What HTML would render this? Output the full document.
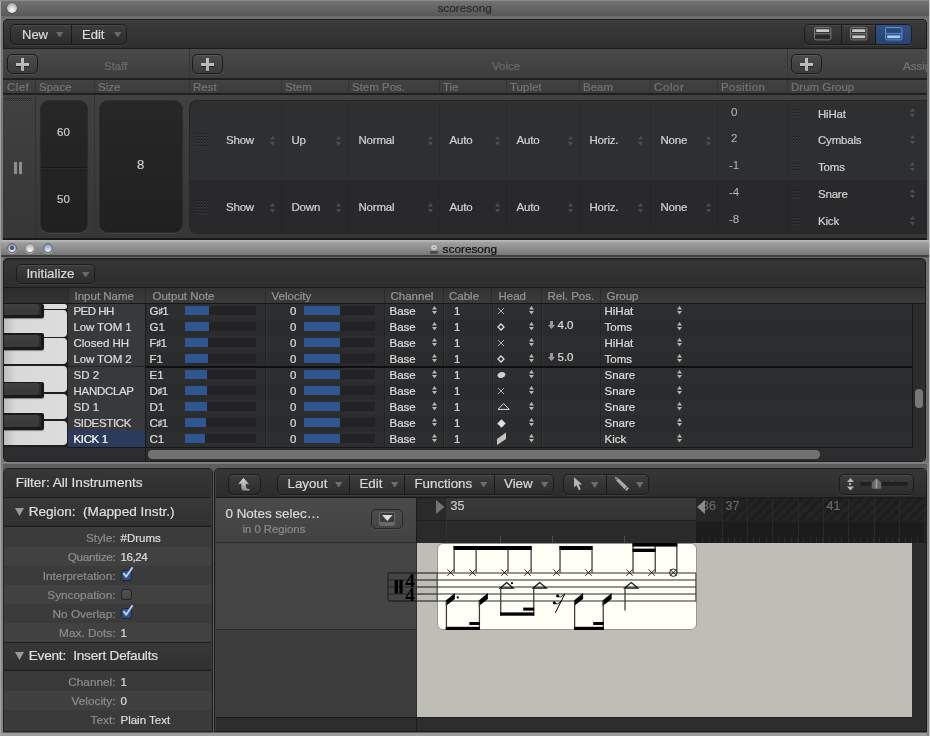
<!DOCTYPE html><html><head><meta charset="utf-8"><title>scoresong</title><style>
*{box-sizing:border-box;margin:0;padding:0}
html,body{width:930px;height:736px;overflow:hidden}
body{position:relative;background:#6c6c6c;will-change:transform;font-family:"Liberation Sans",sans-serif;color:#ccc}
div,svg{position:absolute}
.t{white-space:nowrap;-webkit-text-stroke:0.22px}
.a{display:block}
.ts{font-family:"Liberation Serif",serif;font-weight:bold;font-size:19.5px}
.btn{border:1px solid #1c1c1c;border-radius:5px;background:linear-gradient(#3c3c3c,#2c2c2c);box-shadow:0 1px 0 rgba(255,255,255,.08), inset 0 1px 0 rgba(255,255,255,.08)}
</style></head><body>
<svg width="0" height="0" style="left:0;top:0"><defs><pattern id="dp" width="3" height="3" patternUnits="userSpaceOnUse"><rect x="0" y="0" width="1.4" height="1.2" fill="#1b1b1d"/><rect x="0" y="1.2" width="1.4" height="1" fill="#3c3d3f"/></pattern><pattern id="dp2" width="2" height="2" patternUnits="userSpaceOnUse"><rect x="0" y="0" width="1" height="1" fill="#262626"/><rect x="0" y="1" width="1" height="1" fill="#484848"/></pattern></defs></svg>
<div style="left:0px;top:0px;width:930px;height:19px;background:linear-gradient(#a2a2a2 0,#747474 1px,#707070 2px,#595959 15.5px,#6c6c6c 16px,#707070 19px)"></div>
<div style="left:7px;top:3px;width:10px;height:10px;border-radius:50%;background:radial-gradient(circle at 50% 70%,#fff,#bbb 60%,#888);box-shadow:0 0 0 0.5px #444"></div>
<div class="t" style="left:437.4px;top:0.8px;font-size:11.8px;line-height:15.8px;color:#2c2c2c;">scoresong</div>
<div style="left:0px;top:19px;width:3px;height:221px;background:#767676"></div>
<div style="left:927px;top:19px;width:3px;height:221px;background:#6e6e6e"></div>
<div style="left:3px;top:19px;width:924px;height:219.5px;background:linear-gradient(#414141 76px,#363636);border-top:1px solid #222"></div>
<div style="left:3px;top:238px;width:924px;height:1.6px;background:#181818"></div>
<div style="left:3px;top:19px;width:924px;height:29px;background:linear-gradient(#444 0,#3a3a3a 2px,#2e2e2e);border-radius:4px 4px 0 0;border:1px solid #1c1c1c;border-bottom:none"></div>
<div style="left:3px;top:19px;width:4px;height:4px;background:radial-gradient(circle at 4px 4px,transparent 3.5px,#737373 4px)"></div>
<div style="left:923px;top:19px;width:4px;height:4px;background:radial-gradient(circle at 0 4px,transparent 3.5px,#737373 4px)"></div>
<div style="left:3px;top:47.7px;width:924px;height:1.5px;background:#1c1c1c"></div>
<div class="btn" style="left:10px;top:24px;width:117px;height:21px;"></div>
<div style="left:71px;top:25px;width:1px;height:19px;background:#1a1a1a"></div>
<div class="t" style="left:22px;top:25.7px;font-size:13px;line-height:17px;color:#d8d8d8;">New</div>
<svg class="a" style="left:55.5px;top:31.5px" width="7.4" height="5.6"><path d="M0 0H7.4L3.7 5.6Z" fill="#686868"/></svg>
<div class="t" style="left:82px;top:25.7px;font-size:13px;line-height:17px;color:#d8d8d8;">Edit</div>
<svg class="a" style="left:113.5px;top:31.5px" width="7.4" height="5.6"><path d="M0 0H7.4L3.7 5.6Z" fill="#686868"/></svg>
<div class="btn" style="left:804px;top:24px;width:108px;height:21px;"></div>
<div style="left:876px;top:25px;width:35px;height:19px;background:linear-gradient(#33507f,#2a4370);border-radius:0 4px 4px 0"></div>
<div style="left:841px;top:25px;width:1px;height:19px;background:#1a1a1a"></div>
<div style="left:875px;top:25px;width:1px;height:19px;background:#1a1a1a"></div>
<svg class="a" style="left:813.5px;top:27px" width="18" height="14"><rect x="0.5" y="0.5" width="16.4" height="12.4" rx="1.5" fill="none" stroke="#787878" stroke-width="1"/><rect x="0.5" y="6.2" width="16.4" height="1" fill="#787878"/><rect x="2.2" y="2.2" width="13" height="2.8" fill="#c8c8c8"/><rect x="2.2" y="8.4" width="13" height="2.8" fill="#262626"/></svg>
<svg class="a" style="left:849.5px;top:27px" width="18" height="14"><rect x="0.5" y="0.5" width="16.4" height="12.4" rx="1.5" fill="none" stroke="#787878" stroke-width="1"/><rect x="0.5" y="6.2" width="16.4" height="1" fill="#787878"/><rect x="2.2" y="2.2" width="13" height="2.8" fill="#c8c8c8"/><rect x="2.2" y="8.4" width="13" height="2.8" fill="#c8c8c8"/></svg>
<svg class="a" style="left:884.5px;top:27px" width="18" height="14"><rect x="0.5" y="0.5" width="16.4" height="12.4" rx="1.5" fill="none" stroke="#5f90d8" stroke-width="1"/><rect x="0.5" y="6.2" width="16.4" height="1" fill="#5f90d8"/><rect x="2.2" y="2.2" width="13" height="2.8" fill="#2c4674"/><rect x="2.2" y="8.4" width="13" height="2.8" fill="#a0ccff"/></svg>
<div style="left:3px;top:49px;width:924px;height:29px;background:linear-gradient(#4a4a4a,#484848 3px,#3d3d3d)"></div>
<div style="left:3px;top:78px;width:924px;height:2px;background:#202020"></div>
<div style="left:188.5px;top:49px;width:1px;height:29px;background:#363636"></div>
<div style="left:787px;top:49px;width:1px;height:29px;background:#363636"></div>
<div class="btn" style="left:7px;top:53.7px;width:31.4px;height:20.5px;background:linear-gradient(#4b4b4b,#3b3b3b)"></div>
<div style="left:16px;top:62.6px;width:13px;height:3px;background:#bdbdbd;box-shadow:0 1px 1px rgba(0,0,0,.5)"></div>
<div style="left:21px;top:57.6px;width:3px;height:13px;background:linear-gradient(#c4c4c4,#b0b0b0);box-shadow:0 1px 1px rgba(0,0,0,.3)"></div>
<div class="btn" style="left:192px;top:53.7px;width:31.4px;height:20.5px;background:linear-gradient(#4b4b4b,#3b3b3b)"></div>
<div style="left:201px;top:62.6px;width:13px;height:3px;background:#bdbdbd;box-shadow:0 1px 1px rgba(0,0,0,.5)"></div>
<div style="left:206px;top:57.6px;width:3px;height:13px;background:linear-gradient(#c4c4c4,#b0b0b0);box-shadow:0 1px 1px rgba(0,0,0,.3)"></div>
<div class="btn" style="left:791px;top:53.7px;width:31.4px;height:20.5px;background:linear-gradient(#4b4b4b,#3b3b3b)"></div>
<div style="left:800px;top:62.6px;width:13px;height:3px;background:#bdbdbd;box-shadow:0 1px 1px rgba(0,0,0,.5)"></div>
<div style="left:805px;top:57.6px;width:3px;height:13px;background:linear-gradient(#c4c4c4,#b0b0b0);box-shadow:0 1px 1px rgba(0,0,0,.3)"></div>
<div class="t" style="left:104px;top:58.5px;font-size:11.5px;line-height:15.5px;color:#6c6c6c;">Staff</div>
<div class="t" style="left:492px;top:58.5px;font-size:11.5px;line-height:15.5px;color:#6c6c6c;">Voice</div>
<div style="left:0px;top:0px;width:927px;height:240px;overflow:hidden;background:none"><div class="t" style="left:903px;top:58.5px;font-size:11.5px;line-height:15.5px;color:#747474;">Assign</div></div>
<div style="left:3px;top:80px;width:924px;height:13px;background:linear-gradient(#424242,#3c3c3c)"></div>
<div style="left:3px;top:93px;width:924px;height:2px;background:#202020"></div>
<div class="t" style="left:7px;top:80.0px;font-size:11.5px;line-height:15.5px;color:#747474;letter-spacing:0.4px">Clef</div>
<div class="t" style="left:39px;top:80.0px;font-size:11.5px;line-height:15.5px;color:#747474;letter-spacing:0px">Space</div>
<div class="t" style="left:98px;top:80.0px;font-size:11.5px;line-height:15.5px;color:#747474;letter-spacing:0px">Size</div>
<div class="t" style="left:193px;top:80.0px;font-size:11.5px;line-height:15.5px;color:#747474;letter-spacing:0px">Rest</div>
<div class="t" style="left:285px;top:80.0px;font-size:11.5px;line-height:15.5px;color:#747474;letter-spacing:0px">Stem</div>
<div class="t" style="left:352px;top:80.0px;font-size:11.5px;line-height:15.5px;color:#747474;letter-spacing:0px">Stem Pos.</div>
<div class="t" style="left:443px;top:80.0px;font-size:11.5px;line-height:15.5px;color:#747474;letter-spacing:0px">Tie</div>
<div class="t" style="left:510px;top:80.0px;font-size:11.5px;line-height:15.5px;color:#747474;letter-spacing:0px">Tuplet</div>
<div class="t" style="left:583px;top:80.0px;font-size:11.5px;line-height:15.5px;color:#747474;letter-spacing:0px">Beam</div>
<div class="t" style="left:654px;top:80.0px;font-size:11.5px;line-height:15.5px;color:#747474;letter-spacing:0.6px">Color</div>
<div class="t" style="left:721px;top:80.0px;font-size:11.5px;line-height:15.5px;color:#747474;letter-spacing:0.42px">Position</div>
<div class="t" style="left:791px;top:80.0px;font-size:11.5px;line-height:15.5px;color:#747474;letter-spacing:0px">Drum Group</div>
<div style="left:35px;top:80px;width:1px;height:13px;background:#343434"></div>
<div style="left:94px;top:80px;width:1px;height:13px;background:#343434"></div>
<div style="left:188.5px;top:80px;width:1px;height:13px;background:#343434"></div>
<div style="left:281px;top:80px;width:1px;height:13px;background:#343434"></div>
<div style="left:348px;top:80px;width:1px;height:13px;background:#343434"></div>
<div style="left:439px;top:80px;width:1px;height:13px;background:#343434"></div>
<div style="left:506px;top:80px;width:1px;height:13px;background:#343434"></div>
<div style="left:579px;top:80px;width:1px;height:13px;background:#343434"></div>
<div style="left:650px;top:80px;width:1px;height:13px;background:#343434"></div>
<div style="left:717px;top:80px;width:1px;height:13px;background:#343434"></div>
<div style="left:787px;top:80px;width:1px;height:13px;background:#343434"></div>
<div style="left:35px;top:95px;width:1px;height:143px;background:#333"></div>
<div style="left:94px;top:95px;width:1px;height:143px;background:#333"></div>
<svg class="a" style="left:5px;top:98px" width="27" height="4"><rect width="27" height="4" fill="url(#dp2)"/></svg>
<div style="left:14.3px;top:161.7px;width:3px;height:12px;background:#8e8e8e"></div>
<div style="left:19px;top:161.7px;width:3px;height:12px;background:#8e8e8e"></div>
<div style="left:40px;top:100px;width:48px;height:133px;background:linear-gradient(#272727,#202020);border-radius:9px;border:1px solid #2c2c2c;box-shadow:0 1px 0 rgba(255,255,255,.06)"></div>
<div style="left:41px;top:167px;width:46px;height:1px;background:#161616"></div>
<div style="left:41px;top:168px;width:46px;height:1px;background:#2c2c2c"></div>
<div class="t" style="left:57px;top:125.4px;font-size:11.5px;line-height:15.5px;color:#c8c8c8;">60</div>
<div class="t" style="left:57px;top:192.4px;font-size:11.5px;line-height:15.5px;color:#c8c8c8;">50</div>
<div style="left:99px;top:100px;width:84px;height:133px;background:linear-gradient(#272727,#202020);border-radius:9px;border:1px solid #2c2c2c;box-shadow:0 1px 0 rgba(255,255,255,.06)"></div>
<div class="t" style="left:137px;top:156.2px;font-size:13px;line-height:17px;color:#c8c8c8;">8</div>
<div style="left:189px;top:100px;width:740px;height:134px;background:#2e2f31;border-radius:8px 0 0 8px;border:1px solid #262626;border-right:none;overflow:hidden"><div style="left:0px;top:79px;width:740px;height:55px;background:#29292b"></div></div>
<div style="left:927px;top:95px;width:2px;height:143px;background:#707070"></div>
<div style="left:281px;top:103px;width:1px;height:74px;background:#2a2a2c"></div>
<div style="left:281px;top:184px;width:1px;height:47px;background:#252527"></div>
<div style="left:348px;top:103px;width:1px;height:74px;background:#2a2a2c"></div>
<div style="left:348px;top:184px;width:1px;height:47px;background:#252527"></div>
<div style="left:439px;top:103px;width:1px;height:74px;background:#2a2a2c"></div>
<div style="left:439px;top:184px;width:1px;height:47px;background:#252527"></div>
<div style="left:506px;top:103px;width:1px;height:74px;background:#2a2a2c"></div>
<div style="left:506px;top:184px;width:1px;height:47px;background:#252527"></div>
<div style="left:579px;top:103px;width:1px;height:74px;background:#2a2a2c"></div>
<div style="left:579px;top:184px;width:1px;height:47px;background:#252527"></div>
<div style="left:650px;top:103px;width:1px;height:74px;background:#2a2a2c"></div>
<div style="left:650px;top:184px;width:1px;height:47px;background:#252527"></div>
<div style="left:717px;top:103px;width:1px;height:74px;background:#2a2a2c"></div>
<div style="left:717px;top:184px;width:1px;height:47px;background:#252527"></div>
<div style="left:787px;top:103px;width:1px;height:74px;background:#2a2a2c"></div>
<div style="left:787px;top:184px;width:1px;height:47px;background:#252527"></div>
<svg class="a" style="left:194.5px;top:132.5px" width="14" height="15"><rect width="14" height="15" fill="url(#dp)"/></svg>
<div class="t" style="left:226px;top:133.4px;font-size:11.5px;line-height:15.5px;color:#d0d0d0;letter-spacing:-0.2px">Show</div>
<svg class="a" style="left:269.5px;top:135.70000000000002px" width="5" height="9.6"><path d="M0 3.6L2.5 0L5 3.6Z M0 6.0L2.5 9.6L5 6.0Z" fill="#4e4e4e"/></svg>
<div class="t" style="left:291.5px;top:133.4px;font-size:11.5px;line-height:15.5px;color:#d0d0d0;letter-spacing:-0.2px">Up</div>
<svg class="a" style="left:336.0px;top:135.70000000000002px" width="5" height="9.6"><path d="M0 3.6L2.5 0L5 3.6Z M0 6.0L2.5 9.6L5 6.0Z" fill="#4e4e4e"/></svg>
<div class="t" style="left:358.5px;top:133.4px;font-size:11.5px;line-height:15.5px;color:#d0d0d0;letter-spacing:-0.2px">Normal</div>
<svg class="a" style="left:427.5px;top:135.70000000000002px" width="5" height="9.6"><path d="M0 3.6L2.5 0L5 3.6Z M0 6.0L2.5 9.6L5 6.0Z" fill="#4e4e4e"/></svg>
<div class="t" style="left:449.5px;top:133.4px;font-size:11.5px;line-height:15.5px;color:#d0d0d0;letter-spacing:-0.2px">Auto</div>
<svg class="a" style="left:494.5px;top:135.70000000000002px" width="5" height="9.6"><path d="M0 3.6L2.5 0L5 3.6Z M0 6.0L2.5 9.6L5 6.0Z" fill="#4e4e4e"/></svg>
<div class="t" style="left:516.5px;top:133.4px;font-size:11.5px;line-height:15.5px;color:#d0d0d0;letter-spacing:-0.2px">Auto</div>
<svg class="a" style="left:567.5px;top:135.70000000000002px" width="5" height="9.6"><path d="M0 3.6L2.5 0L5 3.6Z M0 6.0L2.5 9.6L5 6.0Z" fill="#4e4e4e"/></svg>
<div class="t" style="left:589.5px;top:133.4px;font-size:11.5px;line-height:15.5px;color:#d0d0d0;letter-spacing:-0.2px">Horiz.</div>
<svg class="a" style="left:638.0px;top:135.70000000000002px" width="5" height="9.6"><path d="M0 3.6L2.5 0L5 3.6Z M0 6.0L2.5 9.6L5 6.0Z" fill="#4e4e4e"/></svg>
<div class="t" style="left:660.5px;top:133.4px;font-size:11.5px;line-height:15.5px;color:#d0d0d0;letter-spacing:-0.2px">None</div>
<svg class="a" style="left:705.5px;top:135.70000000000002px" width="5" height="9.6"><path d="M0 3.6L2.5 0L5 3.6Z M0 6.0L2.5 9.6L5 6.0Z" fill="#4e4e4e"/></svg>
<svg class="a" style="left:194.5px;top:199.5px" width="14" height="15"><rect width="14" height="15" fill="url(#dp)"/></svg>
<div class="t" style="left:226px;top:200.4px;font-size:11.5px;line-height:15.5px;color:#d0d0d0;letter-spacing:-0.2px">Show</div>
<svg class="a" style="left:269.5px;top:202.70000000000002px" width="5" height="9.6"><path d="M0 3.6L2.5 0L5 3.6Z M0 6.0L2.5 9.6L5 6.0Z" fill="#4e4e4e"/></svg>
<div class="t" style="left:291.5px;top:200.4px;font-size:11.5px;line-height:15.5px;color:#d0d0d0;letter-spacing:-0.2px">Down</div>
<svg class="a" style="left:336.0px;top:202.70000000000002px" width="5" height="9.6"><path d="M0 3.6L2.5 0L5 3.6Z M0 6.0L2.5 9.6L5 6.0Z" fill="#4e4e4e"/></svg>
<div class="t" style="left:358.5px;top:200.4px;font-size:11.5px;line-height:15.5px;color:#d0d0d0;letter-spacing:-0.2px">Normal</div>
<svg class="a" style="left:427.5px;top:202.70000000000002px" width="5" height="9.6"><path d="M0 3.6L2.5 0L5 3.6Z M0 6.0L2.5 9.6L5 6.0Z" fill="#4e4e4e"/></svg>
<div class="t" style="left:449.5px;top:200.4px;font-size:11.5px;line-height:15.5px;color:#d0d0d0;letter-spacing:-0.2px">Auto</div>
<svg class="a" style="left:494.5px;top:202.70000000000002px" width="5" height="9.6"><path d="M0 3.6L2.5 0L5 3.6Z M0 6.0L2.5 9.6L5 6.0Z" fill="#4e4e4e"/></svg>
<div class="t" style="left:516.5px;top:200.4px;font-size:11.5px;line-height:15.5px;color:#d0d0d0;letter-spacing:-0.2px">Auto</div>
<svg class="a" style="left:567.5px;top:202.70000000000002px" width="5" height="9.6"><path d="M0 3.6L2.5 0L5 3.6Z M0 6.0L2.5 9.6L5 6.0Z" fill="#4e4e4e"/></svg>
<div class="t" style="left:589.5px;top:200.4px;font-size:11.5px;line-height:15.5px;color:#d0d0d0;letter-spacing:-0.2px">Horiz.</div>
<svg class="a" style="left:638.0px;top:202.70000000000002px" width="5" height="9.6"><path d="M0 3.6L2.5 0L5 3.6Z M0 6.0L2.5 9.6L5 6.0Z" fill="#4e4e4e"/></svg>
<div class="t" style="left:660.5px;top:200.4px;font-size:11.5px;line-height:15.5px;color:#d0d0d0;letter-spacing:-0.2px">None</div>
<svg class="a" style="left:705.5px;top:202.70000000000002px" width="5" height="9.6"><path d="M0 3.6L2.5 0L5 3.6Z M0 6.0L2.5 9.6L5 6.0Z" fill="#4e4e4e"/></svg>
<div class="t" style="left:731px;top:104.5px;font-size:11.5px;line-height:15.5px;color:#b8b8b8;-webkit-text-stroke:0">0</div>
<svg class="a" style="left:792.5px;top:108.5px" width="8" height="9"><rect width="8" height="9" fill="url(#dp)"/></svg>
<div class="t" style="left:818px;top:106.5px;font-size:11.5px;line-height:15.5px;color:#d0d0d0;letter-spacing:-0.2px">HiHat</div>
<svg class="a" style="left:910.0px;top:108.2px" width="5" height="9.6"><path d="M0 3.6L2.5 0L5 3.6Z M0 6.0L2.5 9.6L5 6.0Z" fill="#4e4e4e"/></svg>
<div class="t" style="left:731px;top:131.4px;font-size:11.5px;line-height:15.5px;color:#b8b8b8;-webkit-text-stroke:0">2</div>
<svg class="a" style="left:792.5px;top:135.5px" width="8" height="9"><rect width="8" height="9" fill="url(#dp)"/></svg>
<div class="t" style="left:818px;top:133.4px;font-size:11.5px;line-height:15.5px;color:#d0d0d0;letter-spacing:-0.2px">Cymbals</div>
<svg class="a" style="left:910.0px;top:135.20000000000002px" width="5" height="9.6"><path d="M0 3.6L2.5 0L5 3.6Z M0 6.0L2.5 9.6L5 6.0Z" fill="#4e4e4e"/></svg>
<div class="t" style="left:729px;top:158.4px;font-size:11.5px;line-height:15.5px;color:#b8b8b8;-webkit-text-stroke:0">-1</div>
<svg class="a" style="left:792.5px;top:162.5px" width="8" height="9"><rect width="8" height="9" fill="url(#dp)"/></svg>
<div class="t" style="left:818px;top:160.4px;font-size:11.5px;line-height:15.5px;color:#d0d0d0;letter-spacing:-0.2px">Toms</div>
<svg class="a" style="left:910.0px;top:162.20000000000002px" width="5" height="9.6"><path d="M0 3.6L2.5 0L5 3.6Z M0 6.0L2.5 9.6L5 6.0Z" fill="#4e4e4e"/></svg>
<div class="t" style="left:729px;top:185.4px;font-size:11.5px;line-height:15.5px;color:#b8b8b8;-webkit-text-stroke:0">-4</div>
<svg class="a" style="left:792.5px;top:189.5px" width="8" height="9"><rect width="8" height="9" fill="url(#dp)"/></svg>
<div class="t" style="left:818px;top:187.4px;font-size:11.5px;line-height:15.5px;color:#d0d0d0;letter-spacing:-0.2px">Snare</div>
<svg class="a" style="left:910.0px;top:189.20000000000002px" width="5" height="9.6"><path d="M0 3.6L2.5 0L5 3.6Z M0 6.0L2.5 9.6L5 6.0Z" fill="#4e4e4e"/></svg>
<div class="t" style="left:729px;top:212.4px;font-size:11.5px;line-height:15.5px;color:#b8b8b8;-webkit-text-stroke:0">-8</div>
<svg class="a" style="left:792.5px;top:216.5px" width="8" height="9"><rect width="8" height="9" fill="url(#dp)"/></svg>
<div class="t" style="left:818px;top:214.4px;font-size:11.5px;line-height:15.5px;color:#d0d0d0;letter-spacing:-0.2px">Kick</div>
<svg class="a" style="left:910.0px;top:216.20000000000002px" width="5" height="9.6"><path d="M0 3.6L2.5 0L5 3.6Z M0 6.0L2.5 9.6L5 6.0Z" fill="#4e4e4e"/></svg>
<div style="left:0px;top:239.8px;width:930px;height:14.8px;background:linear-gradient(#b8b8b8 0,#b0b0b0 1.5px,#a0a0a0 2.5px,#787878 14.8px)"></div>
<div style="left:0px;top:254.5px;width:930px;height:2.2px;background:#3e3e3e"></div>
<div style="left:0px;top:256.6px;width:930px;height:2.4px;background:#6c6c6c"></div>
<div style="left:6.7px;top:242.5px;width:10.6px;height:10.6px;border-radius:50%;background:radial-gradient(circle at 50% 88%,#f2f6fa 0,#b4c2d2 45%,#6e7e90 100%);border:0.8px solid #5c6874;box-shadow:0 1px 0 rgba(255,255,255,.35)"></div>
<div style="left:10.3px;top:246.3px;width:3.4px;height:3.4px;border-radius:50%;background:#47586a"></div>
<div style="left:24.7px;top:242.5px;width:10.6px;height:10.6px;border-radius:50%;background:radial-gradient(circle at 50% 88%,#fff 0,#d6d6d6 45%,#9a9a9a 100%);border:0.8px solid #8a8a8a;box-shadow:0 1px 0 rgba(255,255,255,.35)"></div>
<div style="left:42.7px;top:242.5px;width:10.6px;height:10.6px;border-radius:50%;background:radial-gradient(circle at 50% 88%,#f2f6fa 0,#b4c2d2 45%,#6e7e90 100%);border:0.8px solid #5c6874;box-shadow:0 1px 0 rgba(255,255,255,.35)"></div>
<div style="left:430px;top:243px;width:8px;height:10.6px;background:linear-gradient(#9a9a9a,#8a8a8a 70%,#4e4e4e 72%);border-radius:1px"></div>
<div style="left:431.2px;top:244.5px;width:5.6px;height:5.6px;background:radial-gradient(circle,#8a8a8a 18%,#d4d4d4 30%,#b8b8b8);border-radius:50%"></div>
<div class="t" style="left:442.6px;top:242.3px;font-size:11.8px;line-height:15.8px;color:#101010;">scoresong</div>
<div style="left:0px;top:257px;width:3px;height:210px;background:#808080"></div>
<div style="left:926px;top:257px;width:4px;height:210px;background:#707070"></div>
<div style="left:3px;top:258.3px;width:923px;height:203.5px;background:#2b2c2e;border-radius:5px;border:1px solid #1c1c1c"></div>
<div style="left:4px;top:260px;width:921px;height:27px;background:linear-gradient(#353535,#2d2d2d);border-radius:5px 5px 0 0"></div>
<div style="left:4px;top:287px;width:921px;height:1px;background:#1a1a1a"></div>
<div class="btn" style="left:16px;top:263.7px;width:79px;height:20.6px;"></div>
<div class="t" style="left:26.4px;top:265.1px;font-size:13.3px;line-height:17.3px;color:#d8d8d8;">Initialize</div>
<svg class="a" style="left:81.5px;top:271.5px" width="7.4" height="5.6"><path d="M0 0H7.4L3.7 5.6Z" fill="#686868"/></svg>
<div style="left:4px;top:288px;width:921px;height:15px;background:linear-gradient(#333,#3a3a3a)"></div>
<div style="left:4px;top:302.8px;width:921px;height:1.8px;background:#171717"></div>
<div style="left:4px;top:288px;width:64px;height:15px;background:linear-gradient(#2c2c2c,#323232)"></div>
<div class="t" style="left:74.5px;top:289.4px;font-size:11.5px;line-height:15.5px;color:#949494;">Input Name</div>
<div class="t" style="left:152.5px;top:289.4px;font-size:11.5px;line-height:15.5px;color:#949494;">Output Note</div>
<div class="t" style="left:271.5px;top:289.4px;font-size:11.5px;line-height:15.5px;color:#949494;">Velocity</div>
<div class="t" style="left:390.5px;top:289.4px;font-size:11.5px;line-height:15.5px;color:#949494;">Channel</div>
<div class="t" style="left:449px;top:289.4px;font-size:11.5px;line-height:15.5px;color:#949494;">Cable</div>
<div class="t" style="left:498.5px;top:289.4px;font-size:11.5px;line-height:15.5px;color:#949494;">Head</div>
<div class="t" style="left:547.5px;top:289.4px;font-size:11.5px;line-height:15.5px;color:#949494;">Rel. Pos.</div>
<div class="t" style="left:606.5px;top:289.4px;font-size:11.5px;line-height:15.5px;color:#949494;">Group</div>
<div style="left:68px;top:288px;width:1px;height:15px;background:#2a2a2a"></div>
<div style="left:145px;top:288px;width:1px;height:15px;background:#2a2a2a"></div>
<div style="left:265px;top:288px;width:1px;height:15px;background:#2a2a2a"></div>
<div style="left:384px;top:288px;width:1px;height:15px;background:#2a2a2a"></div>
<div style="left:443px;top:288px;width:1px;height:15px;background:#2a2a2a"></div>
<div style="left:491px;top:288px;width:1px;height:15px;background:#2a2a2a"></div>
<div style="left:541px;top:288px;width:1px;height:15px;background:#2a2a2a"></div>
<div style="left:600px;top:288px;width:1px;height:15px;background:#2a2a2a"></div>
<div style="left:68px;top:304px;width:77px;height:143px;background:#38393b"></div>
<div style="left:145px;top:304px;width:1px;height:157px;background:#1c1c1c"></div>
<div style="left:146px;top:304px;width:766px;height:15px;background:#2d2e30"></div>
<div class="t" style="left:73.5px;top:303.9px;font-size:11.5px;line-height:15.5px;color:#dcdcdc;letter-spacing:-0.55px">PED HH</div>
<div class="t" style="left:149.5px;top:303.9px;font-size:11.5px;line-height:15.5px;color:#dcdcdc;">G<span style="font-size:9px;letter-spacing:-0.6px;position:relative;top:-0.5px">♯</span>1</div>
<div style="left:185px;top:305.6px;width:71px;height:9.2px;background:#232325"></div>
<div style="left:185px;top:305.6px;width:24px;height:9.2px;background:#2f5690"></div>
<div class="t" style="left:290px;top:303.9px;font-size:11.5px;line-height:15.5px;color:#dcdcdc;">0</div>
<div style="left:304px;top:305.6px;width:71px;height:9.2px;background:#232325"></div>
<div style="left:304px;top:305.6px;width:36px;height:9.2px;background:#2f5690"></div>
<div class="t" style="left:389.5px;top:303.9px;font-size:11.5px;line-height:15.5px;color:#dcdcdc;">Base</div>
<svg class="a" style="left:432.2px;top:306.45px" width="5" height="8.5"><path d="M0 3.5L2.5 0L5 3.5Z M0 5.0L2.5 8.5L5 5.0Z" fill="#b4b4b0"/></svg>
<div class="t" style="left:454px;top:303.9px;font-size:11.5px;line-height:15.5px;color:#dcdcdc;">1</div>
<svg class="a" style="left:497px;top:307px" width="8" height="8"><path d="M1 1L7 7M7 1L1 7" stroke="#bbb" stroke-width="0.9" fill="none"/></svg>
<svg class="a" style="left:529.0px;top:306.25px" width="5" height="8.5"><path d="M0 3.5L2.5 0L5 3.5Z M0 5.0L2.5 8.5L5 5.0Z" fill="#b4b4b0"/></svg>
<div class="t" style="left:604.5px;top:303.9px;font-size:11.5px;line-height:15.5px;color:#dcdcdc;">HiHat</div>
<svg class="a" style="left:677.0px;top:306.45px" width="5" height="8.5"><path d="M0 3.5L2.5 0L5 3.5Z M0 5.0L2.5 8.5L5 5.0Z" fill="#b4b4b0"/></svg>
<div style="left:146px;top:320px;width:766px;height:15px;background:#2a2b2d"></div>
<div class="t" style="left:73.5px;top:319.9px;font-size:11.5px;line-height:15.5px;color:#dcdcdc;letter-spacing:-0.12px">Low TOM 1</div>
<div class="t" style="left:149.5px;top:319.9px;font-size:11.5px;line-height:15.5px;color:#dcdcdc;">G1</div>
<div style="left:185px;top:321.6px;width:71px;height:9.2px;background:#232325"></div>
<div style="left:185px;top:321.6px;width:24px;height:9.2px;background:#2f5690"></div>
<div class="t" style="left:290px;top:319.9px;font-size:11.5px;line-height:15.5px;color:#dcdcdc;">0</div>
<div style="left:304px;top:321.6px;width:71px;height:9.2px;background:#232325"></div>
<div style="left:304px;top:321.6px;width:36px;height:9.2px;background:#2f5690"></div>
<div class="t" style="left:389.5px;top:319.9px;font-size:11.5px;line-height:15.5px;color:#dcdcdc;">Base</div>
<svg class="a" style="left:432.2px;top:322.45px" width="5" height="8.5"><path d="M0 3.5L2.5 0L5 3.5Z M0 5.0L2.5 8.5L5 5.0Z" fill="#b4b4b0"/></svg>
<div class="t" style="left:454px;top:319.9px;font-size:11.5px;line-height:15.5px;color:#dcdcdc;">1</div>
<svg class="a" style="left:497px;top:323px" width="8" height="8"><path d="M4 1L7 4L4 7L1 4Z" stroke="#e0e0e0" stroke-width="1.3" fill="none"/></svg>
<svg class="a" style="left:529.0px;top:322.25px" width="5" height="8.5"><path d="M0 3.5L2.5 0L5 3.5Z M0 5.0L2.5 8.5L5 5.0Z" fill="#b4b4b0"/></svg>
<svg class="a" style="left:548px;top:321px" width="7" height="8"><path d="M2 0H5V4H7L3.5 8L0 4H2Z" fill="#9a9a9a"/></svg>
<div class="t" style="left:557.5px;top:317.9px;font-size:11.5px;line-height:15.5px;color:#dcdcdc;">4.0</div>
<div class="t" style="left:604.5px;top:319.9px;font-size:11.5px;line-height:15.5px;color:#dcdcdc;">Toms</div>
<svg class="a" style="left:677.0px;top:322.45px" width="5" height="8.5"><path d="M0 3.5L2.5 0L5 3.5Z M0 5.0L2.5 8.5L5 5.0Z" fill="#b4b4b0"/></svg>
<div style="left:146px;top:336px;width:766px;height:15px;background:#2d2e30"></div>
<div class="t" style="left:73.5px;top:335.9px;font-size:11.5px;line-height:15.5px;color:#dcdcdc;letter-spacing:0px">Closed HH</div>
<div class="t" style="left:149.5px;top:335.9px;font-size:11.5px;line-height:15.5px;color:#dcdcdc;">F<span style="font-size:9px;letter-spacing:-0.6px;position:relative;top:-0.5px">♯</span>1</div>
<div style="left:185px;top:337.6px;width:71px;height:9.2px;background:#232325"></div>
<div style="left:185px;top:337.6px;width:23px;height:9.2px;background:#2f5690"></div>
<div class="t" style="left:290px;top:335.9px;font-size:11.5px;line-height:15.5px;color:#dcdcdc;">0</div>
<div style="left:304px;top:337.6px;width:71px;height:9.2px;background:#232325"></div>
<div style="left:304px;top:337.6px;width:36px;height:9.2px;background:#2f5690"></div>
<div class="t" style="left:389.5px;top:335.9px;font-size:11.5px;line-height:15.5px;color:#dcdcdc;">Base</div>
<svg class="a" style="left:432.2px;top:338.45px" width="5" height="8.5"><path d="M0 3.5L2.5 0L5 3.5Z M0 5.0L2.5 8.5L5 5.0Z" fill="#b4b4b0"/></svg>
<div class="t" style="left:454px;top:335.9px;font-size:11.5px;line-height:15.5px;color:#dcdcdc;">1</div>
<svg class="a" style="left:497px;top:339px" width="8" height="8"><path d="M1 1L7 7M7 1L1 7" stroke="#bbb" stroke-width="0.9" fill="none"/></svg>
<svg class="a" style="left:529.0px;top:338.25px" width="5" height="8.5"><path d="M0 3.5L2.5 0L5 3.5Z M0 5.0L2.5 8.5L5 5.0Z" fill="#b4b4b0"/></svg>
<div class="t" style="left:604.5px;top:335.9px;font-size:11.5px;line-height:15.5px;color:#dcdcdc;">HiHat</div>
<svg class="a" style="left:677.0px;top:338.45px" width="5" height="8.5"><path d="M0 3.5L2.5 0L5 3.5Z M0 5.0L2.5 8.5L5 5.0Z" fill="#b4b4b0"/></svg>
<div style="left:146px;top:352px;width:766px;height:15px;background:#2a2b2d"></div>
<div class="t" style="left:73.5px;top:351.9px;font-size:11.5px;line-height:15.5px;color:#dcdcdc;letter-spacing:-0.12px">Low TOM 2</div>
<div class="t" style="left:149.5px;top:351.9px;font-size:11.5px;line-height:15.5px;color:#dcdcdc;">F1</div>
<div style="left:185px;top:353.6px;width:71px;height:9.2px;background:#232325"></div>
<div style="left:185px;top:353.6px;width:23px;height:9.2px;background:#2f5690"></div>
<div class="t" style="left:290px;top:351.9px;font-size:11.5px;line-height:15.5px;color:#dcdcdc;">0</div>
<div style="left:304px;top:353.6px;width:71px;height:9.2px;background:#232325"></div>
<div style="left:304px;top:353.6px;width:36px;height:9.2px;background:#2f5690"></div>
<div class="t" style="left:389.5px;top:351.9px;font-size:11.5px;line-height:15.5px;color:#dcdcdc;">Base</div>
<svg class="a" style="left:432.2px;top:354.45px" width="5" height="8.5"><path d="M0 3.5L2.5 0L5 3.5Z M0 5.0L2.5 8.5L5 5.0Z" fill="#b4b4b0"/></svg>
<div class="t" style="left:454px;top:351.9px;font-size:11.5px;line-height:15.5px;color:#dcdcdc;">1</div>
<svg class="a" style="left:497px;top:355px" width="8" height="8"><path d="M4 1L7 4L4 7L1 4Z" stroke="#e0e0e0" stroke-width="1.3" fill="none"/></svg>
<svg class="a" style="left:529.0px;top:354.25px" width="5" height="8.5"><path d="M0 3.5L2.5 0L5 3.5Z M0 5.0L2.5 8.5L5 5.0Z" fill="#b4b4b0"/></svg>
<svg class="a" style="left:548px;top:353px" width="7" height="8"><path d="M2 0H5V4H7L3.5 8L0 4H2Z" fill="#9a9a9a"/></svg>
<div class="t" style="left:557.5px;top:349.9px;font-size:11.5px;line-height:15.5px;color:#dcdcdc;">5.0</div>
<div class="t" style="left:604.5px;top:351.9px;font-size:11.5px;line-height:15.5px;color:#dcdcdc;">Toms</div>
<svg class="a" style="left:677.0px;top:354.45px" width="5" height="8.5"><path d="M0 3.5L2.5 0L5 3.5Z M0 5.0L2.5 8.5L5 5.0Z" fill="#b4b4b0"/></svg>
<div style="left:146px;top:368px;width:766px;height:15px;background:#2d2e30"></div>
<div class="t" style="left:73.5px;top:367.9px;font-size:11.5px;line-height:15.5px;color:#dcdcdc;letter-spacing:0px">SD 2</div>
<div class="t" style="left:149.5px;top:367.9px;font-size:11.5px;line-height:15.5px;color:#dcdcdc;">E1</div>
<div style="left:185px;top:369.6px;width:71px;height:9.2px;background:#232325"></div>
<div style="left:185px;top:369.6px;width:22px;height:9.2px;background:#2f5690"></div>
<div class="t" style="left:290px;top:367.9px;font-size:11.5px;line-height:15.5px;color:#dcdcdc;">0</div>
<div style="left:304px;top:369.6px;width:71px;height:9.2px;background:#232325"></div>
<div style="left:304px;top:369.6px;width:36px;height:9.2px;background:#2f5690"></div>
<div class="t" style="left:389.5px;top:367.9px;font-size:11.5px;line-height:15.5px;color:#dcdcdc;">Base</div>
<svg class="a" style="left:432.2px;top:370.45px" width="5" height="8.5"><path d="M0 3.5L2.5 0L5 3.5Z M0 5.0L2.5 8.5L5 5.0Z" fill="#b4b4b0"/></svg>
<div class="t" style="left:454px;top:367.9px;font-size:11.5px;line-height:15.5px;color:#dcdcdc;">1</div>
<svg class="a" style="left:497px;top:371px" width="9" height="8"><ellipse cx="4.4" cy="4" rx="4" ry="2.8" transform="rotate(-20 4.4 4)" fill="#d0d0d0"/></svg>
<svg class="a" style="left:529.0px;top:370.25px" width="5" height="8.5"><path d="M0 3.5L2.5 0L5 3.5Z M0 5.0L2.5 8.5L5 5.0Z" fill="#b4b4b0"/></svg>
<div class="t" style="left:604.5px;top:367.9px;font-size:11.5px;line-height:15.5px;color:#dcdcdc;">Snare</div>
<svg class="a" style="left:677.0px;top:370.45px" width="5" height="8.5"><path d="M0 3.5L2.5 0L5 3.5Z M0 5.0L2.5 8.5L5 5.0Z" fill="#b4b4b0"/></svg>
<div style="left:146px;top:384px;width:766px;height:15px;background:#2a2b2d"></div>
<div class="t" style="left:73.5px;top:383.9px;font-size:11.5px;line-height:15.5px;color:#dcdcdc;letter-spacing:-0.3px">HANDCLAP</div>
<div class="t" style="left:149.5px;top:383.9px;font-size:11.5px;line-height:15.5px;color:#dcdcdc;">D<span style="font-size:9px;letter-spacing:-0.6px;position:relative;top:-0.5px">♯</span>1</div>
<div style="left:185px;top:385.6px;width:71px;height:9.2px;background:#232325"></div>
<div style="left:185px;top:385.6px;width:22px;height:9.2px;background:#2f5690"></div>
<div class="t" style="left:290px;top:383.9px;font-size:11.5px;line-height:15.5px;color:#dcdcdc;">0</div>
<div style="left:304px;top:385.6px;width:71px;height:9.2px;background:#232325"></div>
<div style="left:304px;top:385.6px;width:36px;height:9.2px;background:#2f5690"></div>
<div class="t" style="left:389.5px;top:383.9px;font-size:11.5px;line-height:15.5px;color:#dcdcdc;">Base</div>
<svg class="a" style="left:432.2px;top:386.45px" width="5" height="8.5"><path d="M0 3.5L2.5 0L5 3.5Z M0 5.0L2.5 8.5L5 5.0Z" fill="#b4b4b0"/></svg>
<div class="t" style="left:454px;top:383.9px;font-size:11.5px;line-height:15.5px;color:#dcdcdc;">1</div>
<svg class="a" style="left:497px;top:387px" width="8" height="8"><path d="M1 1L7 7M7 1L1 7" stroke="#bbb" stroke-width="0.9" fill="none"/></svg>
<svg class="a" style="left:529.0px;top:386.25px" width="5" height="8.5"><path d="M0 3.5L2.5 0L5 3.5Z M0 5.0L2.5 8.5L5 5.0Z" fill="#b4b4b0"/></svg>
<div class="t" style="left:604.5px;top:383.9px;font-size:11.5px;line-height:15.5px;color:#dcdcdc;">Snare</div>
<svg class="a" style="left:677.0px;top:386.45px" width="5" height="8.5"><path d="M0 3.5L2.5 0L5 3.5Z M0 5.0L2.5 8.5L5 5.0Z" fill="#b4b4b0"/></svg>
<div style="left:146px;top:400px;width:766px;height:15px;background:#2d2e30"></div>
<div class="t" style="left:73.5px;top:399.9px;font-size:11.5px;line-height:15.5px;color:#dcdcdc;letter-spacing:0px">SD 1</div>
<div class="t" style="left:149.5px;top:399.9px;font-size:11.5px;line-height:15.5px;color:#dcdcdc;">D1</div>
<div style="left:185px;top:401.6px;width:71px;height:9.2px;background:#232325"></div>
<div style="left:185px;top:401.6px;width:21.5px;height:9.2px;background:#2f5690"></div>
<div class="t" style="left:290px;top:399.9px;font-size:11.5px;line-height:15.5px;color:#dcdcdc;">0</div>
<div style="left:304px;top:401.6px;width:71px;height:9.2px;background:#232325"></div>
<div style="left:304px;top:401.6px;width:36px;height:9.2px;background:#2f5690"></div>
<div class="t" style="left:389.5px;top:399.9px;font-size:11.5px;line-height:15.5px;color:#dcdcdc;">Base</div>
<svg class="a" style="left:432.2px;top:402.45px" width="5" height="8.5"><path d="M0 3.5L2.5 0L5 3.5Z M0 5.0L2.5 8.5L5 5.0Z" fill="#b4b4b0"/></svg>
<div class="t" style="left:454px;top:399.9px;font-size:11.5px;line-height:15.5px;color:#dcdcdc;">1</div>
<svg class="a" style="left:497px;top:402px" width="14" height="9"><path d="M1 7.4L6.6 1.6L12.2 7.4Z" stroke="#e0e0e0" stroke-width="1" fill="none"/></svg>
<svg class="a" style="left:529.0px;top:402.25px" width="5" height="8.5"><path d="M0 3.5L2.5 0L5 3.5Z M0 5.0L2.5 8.5L5 5.0Z" fill="#b4b4b0"/></svg>
<div class="t" style="left:604.5px;top:399.9px;font-size:11.5px;line-height:15.5px;color:#dcdcdc;">Snare</div>
<svg class="a" style="left:677.0px;top:402.45px" width="5" height="8.5"><path d="M0 3.5L2.5 0L5 3.5Z M0 5.0L2.5 8.5L5 5.0Z" fill="#b4b4b0"/></svg>
<div style="left:146px;top:416px;width:766px;height:15px;background:#2a2b2d"></div>
<div class="t" style="left:73.5px;top:415.9px;font-size:11.5px;line-height:15.5px;color:#dcdcdc;letter-spacing:-0.36px">SIDESTICK</div>
<div class="t" style="left:149.5px;top:415.9px;font-size:11.5px;line-height:15.5px;color:#dcdcdc;">C<span style="font-size:9px;letter-spacing:-0.6px;position:relative;top:-0.5px">♯</span>1</div>
<div style="left:185px;top:417.6px;width:71px;height:9.2px;background:#232325"></div>
<div style="left:185px;top:417.6px;width:20.5px;height:9.2px;background:#2f5690"></div>
<div class="t" style="left:290px;top:415.9px;font-size:11.5px;line-height:15.5px;color:#dcdcdc;">0</div>
<div style="left:304px;top:417.6px;width:71px;height:9.2px;background:#232325"></div>
<div style="left:304px;top:417.6px;width:36px;height:9.2px;background:#2f5690"></div>
<div class="t" style="left:389.5px;top:415.9px;font-size:11.5px;line-height:15.5px;color:#dcdcdc;">Base</div>
<svg class="a" style="left:432.2px;top:418.45px" width="5" height="8.5"><path d="M0 3.5L2.5 0L5 3.5Z M0 5.0L2.5 8.5L5 5.0Z" fill="#b4b4b0"/></svg>
<div class="t" style="left:454px;top:415.9px;font-size:11.5px;line-height:15.5px;color:#dcdcdc;">1</div>
<svg class="a" style="left:497px;top:418.5px" width="9" height="9"><path d="M4.5 0.3L8.7 4.5L4.5 8.7L0.3 4.5Z" fill="#e0e0e0"/></svg>
<svg class="a" style="left:529.0px;top:418.25px" width="5" height="8.5"><path d="M0 3.5L2.5 0L5 3.5Z M0 5.0L2.5 8.5L5 5.0Z" fill="#b4b4b0"/></svg>
<div class="t" style="left:604.5px;top:415.9px;font-size:11.5px;line-height:15.5px;color:#dcdcdc;">Snare</div>
<svg class="a" style="left:677.0px;top:418.45px" width="5" height="8.5"><path d="M0 3.5L2.5 0L5 3.5Z M0 5.0L2.5 8.5L5 5.0Z" fill="#b4b4b0"/></svg>
<div style="left:146px;top:432px;width:766px;height:15px;background:#2d2e30"></div>
<div style="left:68px;top:430.4px;width:77px;height:16.2px;background:#2b3b5c"></div>
<div class="t" style="left:73.5px;top:431.9px;font-size:11.5px;line-height:15.5px;color:#fff;letter-spacing:-0.36px">KICK 1</div>
<div class="t" style="left:149.5px;top:431.9px;font-size:11.5px;line-height:15.5px;color:#dcdcdc;">C1</div>
<div style="left:185px;top:433.6px;width:71px;height:9.2px;background:#232325"></div>
<div style="left:185px;top:433.6px;width:20px;height:9.2px;background:#2f5690"></div>
<div class="t" style="left:290px;top:431.9px;font-size:11.5px;line-height:15.5px;color:#dcdcdc;">0</div>
<div style="left:304px;top:433.6px;width:71px;height:9.2px;background:#232325"></div>
<div style="left:304px;top:433.6px;width:36px;height:9.2px;background:#2f5690"></div>
<div class="t" style="left:389.5px;top:431.9px;font-size:11.5px;line-height:15.5px;color:#dcdcdc;">Base</div>
<svg class="a" style="left:432.2px;top:434.45px" width="5" height="8.5"><path d="M0 3.5L2.5 0L5 3.5Z M0 5.0L2.5 8.5L5 5.0Z" fill="#b4b4b0"/></svg>
<div class="t" style="left:454px;top:431.9px;font-size:11.5px;line-height:15.5px;color:#dcdcdc;">1</div>
<svg class="a" style="left:496px;top:432px" width="11" height="14"><path d="M1 13V7L10 0.5V7Z" fill="#c4c4c4"/></svg>
<svg class="a" style="left:529.0px;top:434.25px" width="5" height="8.5"><path d="M0 3.5L2.5 0L5 3.5Z M0 5.0L2.5 8.5L5 5.0Z" fill="#b4b4b0"/></svg>
<div class="t" style="left:604.5px;top:431.9px;font-size:11.5px;line-height:15.5px;color:#dcdcdc;">Kick</div>
<svg class="a" style="left:677.0px;top:434.45px" width="5" height="8.5"><path d="M0 3.5L2.5 0L5 3.5Z M0 5.0L2.5 8.5L5 5.0Z" fill="#b4b4b0"/></svg>
<div style="left:265px;top:304px;width:1px;height:143px;background:rgba(0,0,0,.22)"></div>
<div style="left:266px;top:304px;width:1px;height:143px;background:rgba(255,255,255,.03)"></div>
<div style="left:384px;top:304px;width:1px;height:143px;background:rgba(0,0,0,.22)"></div>
<div style="left:385px;top:304px;width:1px;height:143px;background:rgba(255,255,255,.03)"></div>
<div style="left:443px;top:304px;width:1px;height:143px;background:rgba(0,0,0,.22)"></div>
<div style="left:444px;top:304px;width:1px;height:143px;background:rgba(255,255,255,.03)"></div>
<div style="left:492px;top:304px;width:1px;height:143px;background:rgba(0,0,0,.22)"></div>
<div style="left:493px;top:304px;width:1px;height:143px;background:rgba(255,255,255,.03)"></div>
<div style="left:541px;top:304px;width:1px;height:143px;background:rgba(0,0,0,.22)"></div>
<div style="left:542px;top:304px;width:1px;height:143px;background:rgba(255,255,255,.03)"></div>
<div style="left:600px;top:304px;width:1px;height:143px;background:rgba(0,0,0,.22)"></div>
<div style="left:601px;top:304px;width:1px;height:143px;background:rgba(255,255,255,.03)"></div>
<div style="left:146px;top:366px;width:766px;height:1.5px;background:#0e0e0e"></div>
<div style="left:68px;top:366px;width:77px;height:1px;background:#222"></div>
<div style="left:68px;top:446.5px;width:845px;height:1px;background:#161616"></div>
<div style="left:4px;top:304px;width:64px;height:143px;background:#1e1e1e"></div>
<div style="left:4px;top:304px;width:63px;height:5px;background:linear-gradient(90deg,#bdbdbd,#d9d9d9 12px,#dcdcdc);border-radius:0 4px 4px 0"></div>
<div style="left:4px;top:310.2px;width:63px;height:26.4px;background:linear-gradient(90deg,#bdbdbd,#d9d9d9 12px,#dcdcdc);border-radius:0 4px 4px 0"></div>
<div style="left:4px;top:338.2px;width:63px;height:26.3px;background:linear-gradient(90deg,#bdbdbd,#d9d9d9 12px,#dcdcdc);border-radius:0 4px 4px 0"></div>
<div style="left:4px;top:366.3px;width:63px;height:25.8px;background:linear-gradient(90deg,#bdbdbd,#d9d9d9 12px,#dcdcdc);border-radius:0 4px 4px 0"></div>
<div style="left:4px;top:393.5px;width:63px;height:25.8px;background:linear-gradient(90deg,#bdbdbd,#d9d9d9 12px,#dcdcdc);border-radius:0 4px 4px 0"></div>
<div style="left:4px;top:420.7px;width:63px;height:24.7px;background:linear-gradient(90deg,#bdbdbd,#d9d9d9 12px,#dcdcdc);border-radius:0 4px 4px 0"></div>
<div style="left:4px;top:304px;width:40px;height:14.1px;background:#1a1a1a;border-radius:0 2px 2px 0;box-shadow:0 1px 1px rgba(0,0,0,.4)"></div>
<div style="left:4px;top:304px;width:34.5px;height:11.1px;background:linear-gradient(#404042,#38383a);border-radius:0 2px 2px 0"></div>
<div style="left:38.5px;top:304px;width:2px;height:11.1px;background:#2c2c2e"></div>
<div style="left:4px;top:333.3px;width:40px;height:16.9px;background:#1a1a1a;border-radius:0 2px 2px 0;box-shadow:0 1px 1px rgba(0,0,0,.4)"></div>
<div style="left:4px;top:334.8px;width:34.5px;height:12.399999999999999px;background:linear-gradient(#404042,#38383a);border-radius:0 2px 2px 0"></div>
<div style="left:38.5px;top:334.8px;width:2px;height:12.399999999999999px;background:#2c2c2e"></div>
<div style="left:4px;top:381.6px;width:40px;height:16.4px;background:#1a1a1a;border-radius:0 2px 2px 0;box-shadow:0 1px 1px rgba(0,0,0,.4)"></div>
<div style="left:4px;top:383.1px;width:34.5px;height:11.899999999999999px;background:linear-gradient(#404042,#38383a);border-radius:0 2px 2px 0"></div>
<div style="left:38.5px;top:383.1px;width:2px;height:11.899999999999999px;background:#2c2c2e"></div>
<div style="left:4px;top:413.3px;width:40px;height:16.9px;background:#1a1a1a;border-radius:0 2px 2px 0;box-shadow:0 1px 1px rgba(0,0,0,.4)"></div>
<div style="left:4px;top:414.8px;width:34.5px;height:12.399999999999999px;background:linear-gradient(#404042,#38383a);border-radius:0 2px 2px 0"></div>
<div style="left:38.5px;top:414.8px;width:2px;height:12.399999999999999px;background:#2c2c2e"></div>
<div style="left:4px;top:447.5px;width:921px;height:13.5px;background:#2d2d2f"></div>
<div style="left:145px;top:447px;width:1px;height:14.5px;background:#1a1a1a"></div>
<div style="left:148px;top:450px;width:671.5px;height:8.5px;background:#727272;border-radius:4.2px"></div>
<div style="left:912px;top:304px;width:13px;height:143px;background:#2c2c2e;border-left:1px solid #161616"></div>
<div style="left:915.2px;top:389px;width:8.3px;height:18.7px;background:#787878;border-radius:4.2px"></div>
<div style="left:0px;top:461.5px;width:930px;height:274.5px;background:#5e5e5e"></div>
<div style="left:0px;top:461.5px;width:930px;height:2.8px;background:linear-gradient(#868686,#787878)"></div>
<div style="left:0px;top:467px;width:3px;height:269px;background:#868686"></div>
<div style="left:3px;top:468px;width:209.5px;height:264px;background:#3d3d3d;border:1px solid #222;border-right:1.4px solid #1e1e1e;border-radius:5px 5px 0 0;overflow:hidden"></div>
<div style="left:4px;top:469px;width:207px;height:28px;background:linear-gradient(#363636,#2f2f2f)"></div>
<div style="left:4px;top:497px;width:207px;height:1px;background:#1c1c1c"></div>
<div class="t" style="left:15.7px;top:473.9px;font-size:13.6px;line-height:17.6px;color:#dedede;">Filter: All Instruments</div>
<div style="left:4px;top:498px;width:207px;height:28px;background:linear-gradient(#383838,#303030)"></div>
<div style="left:4px;top:526px;width:207px;height:1px;background:#1c1c1c"></div>
<svg class="a" style="left:15px;top:508px" width="9" height="8"><path d="M0 0H9L4.5 8Z" fill="#9a9a9a"/></svg>
<div class="t" style="left:28.7px;top:502.9px;font-size:13.6px;line-height:17.6px;color:#dedede;">Region:&nbsp; (Mapped Instr.)</div>
<div style="left:4px;top:527px;width:207px;height:21px;background:#3b3b3b"></div>
<div class="t" style="right:814.5px;top:530.8px;font-size:11.8px;line-height:15.8px;color:#8c8c8c;">Style:</div>
<div class="t" style="left:120.5px;top:531.0px;font-size:11.5px;line-height:15.5px;color:#dcdcdc;">#Drums</div>
<div style="left:4px;top:547px;width:207px;height:19px;background:#414141"></div>
<div class="t" style="right:814.5px;top:549.8px;font-size:11.8px;line-height:15.8px;color:#8c8c8c;letter-spacing:-0.3px">Quantize:</div>
<div class="t" style="left:120.5px;top:550.0px;font-size:11.5px;line-height:15.5px;color:#dcdcdc;letter-spacing:-0.4px">16,24</div>
<div style="left:4px;top:566px;width:207px;height:19px;background:#3b3b3b"></div>
<div class="t" style="right:814.5px;top:568.8px;font-size:11.8px;line-height:15.8px;color:#8c8c8c;">Interpretation:</div>
<div style="left:120.7px;top:569.6px;width:11.6px;height:11.4px;background:linear-gradient(#38558a,#324c7c);border:1px solid #1e2634;border-radius:3px"></div><svg class="a" style="left:121px;top:566px" width="14" height="14"><path d="M2.4 7.2L5.2 10.6L11.6 1.2" stroke="#b4d0ff" stroke-width="1.9" fill="none"/></svg>
<div style="left:4px;top:585px;width:207px;height:19px;background:#414141"></div>
<div class="t" style="right:814.5px;top:587.8px;font-size:11.8px;line-height:15.8px;color:#8c8c8c;">Syncopation:</div>
<div style="left:120.7px;top:588.6px;width:11.6px;height:11.4px;background:linear-gradient(#505050,#454545);border:1px solid #222;border-radius:3px"></div>
<div style="left:4px;top:604px;width:207px;height:19px;background:#3b3b3b"></div>
<div class="t" style="right:814.5px;top:606.8px;font-size:11.8px;line-height:15.8px;color:#8c8c8c;">No Overlap:</div>
<div style="left:120.7px;top:607.6px;width:11.6px;height:11.4px;background:linear-gradient(#38558a,#324c7c);border:1px solid #1e2634;border-radius:3px"></div><svg class="a" style="left:121px;top:604px" width="14" height="14"><path d="M2.4 7.2L5.2 10.6L11.6 1.2" stroke="#b4d0ff" stroke-width="1.9" fill="none"/></svg>
<div style="left:4px;top:623px;width:207px;height:19px;background:#414141"></div>
<div class="t" style="right:814.5px;top:625.8px;font-size:11.8px;line-height:15.8px;color:#8c8c8c;">Max. Dots:</div>
<div class="t" style="left:120.5px;top:626.0px;font-size:11.5px;line-height:15.5px;color:#dcdcdc;">1</div>
<div style="left:4px;top:642px;width:207px;height:1px;background:#1c1c1c"></div>
<div style="left:4px;top:643px;width:207px;height:27px;background:linear-gradient(#383838,#303030)"></div>
<div style="left:4px;top:670px;width:207px;height:1px;background:#1c1c1c"></div>
<svg class="a" style="left:15px;top:652px" width="9" height="8"><path d="M0 0H9L4.5 8Z" fill="#9a9a9a"/></svg>
<div class="t" style="left:28.7px;top:646.9px;font-size:13.6px;line-height:17.6px;color:#dedede;letter-spacing:-0.2px">Event:&nbsp; Insert Defaults</div>
<div style="left:4px;top:671px;width:207px;height:20px;background:#3a3a3a"></div>
<div class="t" style="right:814.5px;top:674.8px;font-size:11.8px;line-height:15.8px;color:#8c8c8c;">Channel:</div>
<div class="t" style="left:120.5px;top:675.0px;font-size:11.5px;line-height:15.5px;color:#dcdcdc;">1</div>
<div style="left:4px;top:691px;width:207px;height:19px;background:#404040"></div>
<div class="t" style="right:814.5px;top:693.8px;font-size:11.8px;line-height:15.8px;color:#8c8c8c;">Velocity:</div>
<div class="t" style="left:120.5px;top:694.0px;font-size:11.5px;line-height:15.5px;color:#dcdcdc;">0</div>
<div style="left:4px;top:710px;width:207px;height:22px;background:#3a3a3a"></div>
<div class="t" style="right:814.5px;top:712.8px;font-size:11.8px;line-height:15.8px;color:#8c8c8c;">Text:</div>
<div class="t" style="left:120.5px;top:713.0px;font-size:11.5px;line-height:15.5px;color:#dcdcdc;">Plain Text</div>
<div style="left:0px;top:732.6px;width:930px;height:3.4px;background:#9c9c9c"></div>
<div style="left:3px;top:731px;width:209px;height:1px;background:#222"></div>
<div style="left:214px;top:468px;width:713px;height:264px;background:#404040;border:1px solid #1e1e1e;border-left:1.4px solid #1c1c1c;border-radius:5px 5px 0 0"></div>
<div style="left:216px;top:469px;width:710px;height:28px;background:linear-gradient(#363636,#2c2c2c)"></div>
<div style="left:216px;top:497px;width:710px;height:1px;background:#1a1a1a"></div>
<div style="left:927px;top:467px;width:3px;height:269px;background:#868686"></div>
<div class="btn" style="left:228px;top:474px;width:33px;height:21px;"></div>
<svg class="a" style="left:236px;top:476px" width="16" height="17" viewBox="236 476 16 17"><defs><linearGradient id="ag" x1="0" y1="0" x2="0" y2="1"><stop offset="0" stop-color="#d8d8d8"/><stop offset="1" stop-color="#8c8c8c"/></linearGradient></defs><path d="M243.4 477.4L249.6 484.2H246.3V487Q246.3 488.8 250 488.8V491H244.6Q241 491 241 487.4V484.2H237.6Z" fill="url(#ag)" stroke="#1a1a1a" stroke-width="0.5"/></svg>
<div class="btn" style="left:277px;top:474px;width:277px;height:21px;"></div>
<div style="left:349px;top:475px;width:1px;height:19px;background:#1a1a1a"></div>
<div style="left:404px;top:475px;width:1px;height:19px;background:#1a1a1a"></div>
<div style="left:494px;top:475px;width:1px;height:19px;background:#1a1a1a"></div>
<div class="t" style="left:287.5px;top:475.1px;font-size:13.3px;line-height:17.3px;color:#d8d8d8;">Layout</div>
<svg class="a" style="left:334.5px;top:481.5px" width="7.4" height="5.6"><path d="M0 0H7.4L3.7 5.6Z" fill="#6e6e6e"/></svg>
<div class="t" style="left:359.5px;top:475.1px;font-size:13.3px;line-height:17.3px;color:#d8d8d8;">Edit</div>
<svg class="a" style="left:390.5px;top:481.5px" width="7.4" height="5.6"><path d="M0 0H7.4L3.7 5.6Z" fill="#6e6e6e"/></svg>
<div class="t" style="left:414.5px;top:475.1px;font-size:13.3px;line-height:17.3px;color:#d8d8d8;">Functions</div>
<svg class="a" style="left:479.5px;top:481.5px" width="7.4" height="5.6"><path d="M0 0H7.4L3.7 5.6Z" fill="#6e6e6e"/></svg>
<div class="t" style="left:504px;top:475.1px;font-size:13.3px;line-height:17.3px;color:#d8d8d8;">View</div>
<svg class="a" style="left:540.5px;top:481.5px" width="7.4" height="5.6"><path d="M0 0H7.4L3.7 5.6Z" fill="#6e6e6e"/></svg>
<div class="btn" style="left:563px;top:474px;width:86px;height:21px;"></div>
<div style="left:606px;top:475px;width:1px;height:19px;background:#1a1a1a"></div>
<svg class="a" style="left:573px;top:476px" width="12" height="16"><path d="M1 1.2V11.6L3.6 9.2L5.8 14.2L7.8 13.3L5.7 8.5H9.2Z" fill="#b4b4b4"/></svg>
<svg class="a" style="left:591px;top:481.5px" width="7.5" height="6"><path d="M0 0H7.5L3.75 6Z" fill="#6e6e6e"/></svg>
<svg class="a" style="left:613px;top:475px" width="18" height="18"><path d="M1.5 1.8L5 2.8L3 5Z" fill="#9a9a9a"/><path d="M5.3 3.2L14.2 11.4L11.6 14.2L3.2 5.4Z" fill="#a8a8a8"/><path d="M14.8 12L12.2 14.8L13.4 15.8L15.8 13.2Z" fill="#c4c4c4"/></svg>
<svg class="a" style="left:635.5px;top:481.5px" width="7.5" height="6"><path d="M0 0H7.5L3.75 6Z" fill="#6e6e6e"/></svg>
<div class="btn" style="left:839px;top:474px;width:75px;height:21px;"></div>
<svg class="a" style="left:846.5px;top:477.9px" width="7" height="12.6"><path d="M0 4L3.5 0L7 4Z M0 8.6L3.5 12.6L7 8.6Z" fill="#b8b8b8"/></svg>
<div style="left:849px;top:483.2px;width:2px;height:2px;background:#b8b8b8"></div>
<div style="left:860px;top:482.2px;width:48px;height:3.5px;background:#202020;border-radius:2px"></div>
<div style="left:863px;top:479.5px;width:1.5px;height:1.5px;background:#4a4a4a;border-radius:1px"></div>
<div style="left:866px;top:479.5px;width:1.5px;height:1.5px;background:#4a4a4a;border-radius:1px"></div>
<div style="left:870px;top:479.5px;width:1.5px;height:1.5px;background:#4a4a4a;border-radius:1px"></div>
<div style="left:891px;top:479.5px;width:1.5px;height:1.5px;background:#4a4a4a;border-radius:1px"></div>
<div style="left:905px;top:479.5px;width:1.5px;height:1.5px;background:#4a4a4a;border-radius:1px"></div>
<svg class="a" style="left:870.5px;top:477.5px" width="11" height="11"><path d="M5.5 0.3L10.3 4.5V9.5Q10.3 10.7 9 10.7H2Q0.7 10.7 0.7 9.5V4.5Z" fill="#686868"/><rect x="4.6" y="1.5" width="1.8" height="9" fill="#9c9c9c"/></svg>
<div style="left:216px;top:498px;width:200px;height:45px;background:linear-gradient(#4a4a4a,#424242)"></div>
<div style="left:216px;top:542px;width:200px;height:1px;background:#2a2a2a"></div>
<div class="t" style="left:225.5px;top:505.0px;font-size:13.4px;line-height:17.4px;color:#d8d8d8;">0 Notes selec…</div>
<div class="t" style="left:242.5px;top:521.6px;font-size:11.3px;line-height:15.3px;color:#8a8a8a;">in 0 Regions</div>
<div style="left:371px;top:508.5px;width:32px;height:20.5px;background:linear-gradient(#4c4c4c,#454545);border:1px solid #262626;border-radius:5px;box-shadow:0 1px 0 rgba(255,255,255,.08)"></div>
<div style="left:379px;top:512px;width:16px;height:14px;background:linear-gradient(#3a3a3a 0,#3a3a3a 9px,#6a6a6a 9px,#6a6a6a 12px);border-radius:2px;border:1px solid #686868"></div>
<svg class="a" style="left:382px;top:515px" width="11" height="6"><path d="M0 0H10.6L5.3 6Z" fill="#dcdcdc"/></svg>
<div style="left:416px;top:498px;width:510px;height:45px;background:#2a2a2a;border-left:1px solid #1c1c1c"></div>
<div style="left:446px;top:498px;width:250px;height:22px;background:linear-gradient(#3a3a3a,#333)"></div>
<div style="left:416px;top:520px;width:280px;height:1px;background:#1f1f1f"></div>
<div style="left:446px;top:498px;width:1px;height:45px;background:#333"></div>
<div style="left:696px;top:498px;width:230px;height:45px;background:#1c1c1c"></div>
<div style="left:696px;top:498px;width:230px;height:23px;background:repeating-linear-gradient(135deg,#232323 0,#232323 3.5px,#1e1e1e 3.5px,#1e1e1e 7px)"></div>
<div style="left:696px;top:498px;width:26px;height:23px;background:#252525"></div>
<div style="left:696px;top:520.5px;width:230px;height:1px;background:#222"></div>
<svg class="a" style="left:436px;top:500px" width="9" height="14"><path d="M0 0L8.5 7L0 14Z" fill="#747474"/></svg>
<div class="t" style="left:450.5px;top:498.4px;font-size:12.5px;line-height:16.5px;color:#c8c8c8;">35</div>
<div class="t" style="left:702px;top:498.4px;font-size:12.5px;line-height:16.5px;color:#666;">36</div>
<svg class="a" style="left:697px;top:500px" width="9" height="14"><path d="M8 0L0 7L8 14Z" fill="#8a8a8a"/></svg>
<div class="t" style="left:725.5px;top:498.4px;font-size:12.5px;line-height:16.5px;color:#686868;">37</div>
<div class="t" style="left:826.5px;top:498.4px;font-size:12.5px;line-height:16.5px;color:#686868;">41</div>
<div style="left:500px;top:536px;width:1px;height:7px;background:#4a4a4a"></div>
<div style="left:552px;top:536px;width:1px;height:7px;background:#4a4a4a"></div>
<div style="left:624px;top:536px;width:1px;height:7px;background:#4a4a4a"></div>
<div style="left:722px;top:498px;width:1px;height:45px;background:#2a2a2a"></div>
<div style="left:747px;top:498px;width:1px;height:45px;background:#2a2a2a"></div>
<div style="left:772px;top:498px;width:1px;height:45px;background:#2a2a2a"></div>
<div style="left:798px;top:498px;width:1px;height:45px;background:#2a2a2a"></div>
<div style="left:823px;top:498px;width:1px;height:45px;background:#2a2a2a"></div>
<div style="left:848px;top:498px;width:1px;height:45px;background:#2a2a2a"></div>
<div style="left:874px;top:498px;width:1px;height:45px;background:#2a2a2a"></div>
<div style="left:899px;top:498px;width:1px;height:45px;background:#2a2a2a"></div>
<div style="left:924px;top:498px;width:1px;height:45px;background:#2a2a2a"></div>
<div style="left:702.0px;top:536.5px;width:1px;height:6.5px;background:#2b2b2b"></div>
<div style="left:708.5px;top:536.5px;width:1px;height:6.5px;background:#2b2b2b"></div>
<div style="left:714.5px;top:536.5px;width:1px;height:6.5px;background:#2b2b2b"></div>
<div style="left:721.0px;top:536.5px;width:1px;height:6.5px;background:#2b2b2b"></div>
<div style="left:727.5px;top:536.5px;width:1px;height:6.5px;background:#2b2b2b"></div>
<div style="left:733.5px;top:536.5px;width:1px;height:6.5px;background:#2b2b2b"></div>
<div style="left:740.0px;top:536.5px;width:1px;height:6.5px;background:#2b2b2b"></div>
<div style="left:746.5px;top:536.5px;width:1px;height:6.5px;background:#2b2b2b"></div>
<div style="left:752.5px;top:536.5px;width:1px;height:6.5px;background:#2b2b2b"></div>
<div style="left:759.0px;top:536.5px;width:1px;height:6.5px;background:#2b2b2b"></div>
<div style="left:765.5px;top:536.5px;width:1px;height:6.5px;background:#2b2b2b"></div>
<div style="left:771.5px;top:536.5px;width:1px;height:6.5px;background:#2b2b2b"></div>
<div style="left:778.0px;top:536.5px;width:1px;height:6.5px;background:#2b2b2b"></div>
<div style="left:784.0px;top:536.5px;width:1px;height:6.5px;background:#2b2b2b"></div>
<div style="left:790.5px;top:536.5px;width:1px;height:6.5px;background:#2b2b2b"></div>
<div style="left:797.0px;top:536.5px;width:1px;height:6.5px;background:#2b2b2b"></div>
<div style="left:803.0px;top:536.5px;width:1px;height:6.5px;background:#2b2b2b"></div>
<div style="left:809.5px;top:536.5px;width:1px;height:6.5px;background:#2b2b2b"></div>
<div style="left:816.0px;top:536.5px;width:1px;height:6.5px;background:#2b2b2b"></div>
<div style="left:822.0px;top:536.5px;width:1px;height:6.5px;background:#2b2b2b"></div>
<div style="left:828.5px;top:536.5px;width:1px;height:6.5px;background:#2b2b2b"></div>
<div style="left:835.0px;top:536.5px;width:1px;height:6.5px;background:#2b2b2b"></div>
<div style="left:841.0px;top:536.5px;width:1px;height:6.5px;background:#2b2b2b"></div>
<div style="left:847.5px;top:536.5px;width:1px;height:6.5px;background:#2b2b2b"></div>
<div style="left:854.0px;top:536.5px;width:1px;height:6.5px;background:#2b2b2b"></div>
<div style="left:860.0px;top:536.5px;width:1px;height:6.5px;background:#2b2b2b"></div>
<div style="left:866.5px;top:536.5px;width:1px;height:6.5px;background:#2b2b2b"></div>
<div style="left:873.0px;top:536.5px;width:1px;height:6.5px;background:#2b2b2b"></div>
<div style="left:879.0px;top:536.5px;width:1px;height:6.5px;background:#2b2b2b"></div>
<div style="left:885.5px;top:536.5px;width:1px;height:6.5px;background:#2b2b2b"></div>
<div style="left:892.0px;top:536.5px;width:1px;height:6.5px;background:#2b2b2b"></div>
<div style="left:898.0px;top:536.5px;width:1px;height:6.5px;background:#2b2b2b"></div>
<div style="left:904.5px;top:536.5px;width:1px;height:6.5px;background:#2b2b2b"></div>
<div style="left:910.5px;top:536.5px;width:1px;height:6.5px;background:#2b2b2b"></div>
<div style="left:917.0px;top:536.5px;width:1px;height:6.5px;background:#2b2b2b"></div>
<div style="left:923.5px;top:536.5px;width:1px;height:6.5px;background:#2b2b2b"></div>
<div style="left:216px;top:543px;width:200px;height:86px;background:#454545"></div>
<div style="left:216px;top:629px;width:200px;height:1px;background:#2c2c2c"></div>
<div style="left:216px;top:630px;width:200px;height:88px;background:#3c3c3c"></div>
<div style="left:416px;top:543px;width:496px;height:174px;background:#bfbeb6;border-left:1px solid #333"></div>
<div style="left:912px;top:543px;width:14px;height:175px;background:#2c2c2c"></div>
<div style="left:216px;top:717.3px;width:696px;height:1px;background:#1c1c1c"></div>
<div style="left:216px;top:718px;width:710px;height:14px;background:#2d2d2d"></div>
<div style="left:415.5px;top:718px;width:1px;height:14px;background:#1c1c1c"></div>
<div style="left:216px;top:731px;width:710px;height:1px;background:#1c1c1c"></div>
<div style="left:437px;top:543px;width:260px;height:87px;background:#fffff6;border-radius:6px;border:1px solid #96968c"></div>
<svg class="a" style="left:380px;top:535px" width="340" height="105" viewBox="380 535 340 105"><clipPath id="hc"><rect x="380" y="535" width="36" height="105"/></clipPath><rect x="388" y="572.4" width="49" height="1.2" fill="#2e2e2c"/><rect x="437" y="572.4" width="259" height="1.2" fill="#4e4e4c"/><rect x="388" y="579.4" width="49" height="1.2" fill="#2e2e2c"/><rect x="437" y="579.4" width="259" height="1.2" fill="#4e4e4c"/><rect x="388" y="586.4" width="49" height="1.2" fill="#2e2e2c"/><rect x="437" y="586.4" width="259" height="1.2" fill="#4e4e4c"/><rect x="388" y="593.4" width="49" height="1.2" fill="#2e2e2c"/><rect x="437" y="593.4" width="259" height="1.2" fill="#4e4e4c"/><rect x="388" y="600.4" width="49" height="1.2" fill="#2e2e2c"/><rect x="437" y="600.4" width="259" height="1.2" fill="#4e4e4c"/><rect x="387.9" y="572.9" width="40" height="28.2" rx="1.5" fill="none" stroke="#262626" stroke-width="1.3" clip-path="url(#hc)"/><rect x="436.6" y="573" width="1" height="28" fill="#444"/><rect x="695.3" y="573" width="1" height="28" fill="#444"/><rect x="394.6" y="580" width="3.4" height="13.6" fill="#000"/><rect x="399.4" y="580" width="3.2" height="13.6" fill="#000"/><g clip-path="url(#hc)"><text x="405.2" y="586.6" class="ts" fill="#000">4</text><text x="405.2" y="600.8" class="ts" fill="#000">4</text></g><path d="M447.40000000000003 569.4L453.8 575.8000000000001M453.8 569.4L447.40000000000003 575.8000000000001" stroke="#111" stroke-width="0.9" fill="none"/><path d="M469.40000000000003 569.4L475.8 575.8000000000001M475.8 569.4L469.40000000000003 575.8000000000001" stroke="#111" stroke-width="0.9" fill="none"/><path d="M501.3 569.4L507.7 575.8000000000001M507.7 569.4L501.3 575.8000000000001" stroke="#111" stroke-width="0.9" fill="none"/><path d="M524.4 569.4L530.8000000000001 575.8000000000001M530.8000000000001 569.4L524.4 575.8000000000001" stroke="#111" stroke-width="0.9" fill="none"/><path d="M553.3 569.4L559.7 575.8000000000001M559.7 569.4L553.3 575.8000000000001" stroke="#111" stroke-width="0.9" fill="none"/><path d="M585.3 569.4L591.7 575.8000000000001M591.7 569.4L585.3 575.8000000000001" stroke="#111" stroke-width="0.9" fill="none"/><path d="M626.3 569.4L632.7 575.8000000000001M632.7 569.4L626.3 575.8000000000001" stroke="#111" stroke-width="0.9" fill="none"/><path d="M648.5 569.4L654.9000000000001 575.8000000000001M654.9000000000001 569.4L648.5 575.8000000000001" stroke="#111" stroke-width="0.9" fill="none"/><path d="M670.0999999999999 569.4L676.5 575.8000000000001M676.5 569.4L670.0999999999999 575.8000000000001" stroke="#111" stroke-width="0.9" fill="none"/><circle cx="673.3" cy="572.7" r="3.7" fill="none" stroke="#111" stroke-width="0.9"/><rect x="453.5" y="546" width="1.25" height="26.600000000000023" fill="#3a3a3a"/><rect x="475.5" y="546" width="1.25" height="26.600000000000023" fill="#3a3a3a"/><rect x="507.4" y="546" width="1.25" height="26.600000000000023" fill="#3a3a3a"/><rect x="530.5" y="546" width="1.25" height="26.600000000000023" fill="#3a3a3a"/><rect x="559.4" y="546" width="1.25" height="26.600000000000023" fill="#3a3a3a"/><rect x="591.4" y="546" width="1.25" height="26.600000000000023" fill="#3a3a3a"/><rect x="632.4" y="543" width="1.25" height="29.600000000000023" fill="#3a3a3a"/><rect x="654.6" y="543" width="1.25" height="29.600000000000023" fill="#3a3a3a"/><rect x="676.1999999999999" y="543" width="1.25" height="29.600000000000023" fill="#3a3a3a"/><rect x="453.6" y="546" width="78" height="4" fill="#000"/><rect x="559.5" y="546" width="33" height="4" fill="#000"/><rect x="632.5" y="543" width="44.8" height="3.6" fill="#000"/><rect x="632.5" y="548.6" width="23" height="3.4" fill="#000"/><path d="M445.8 606V600.5L454.90000000000003 593.1V599.1Z" fill="#000"/><path d="M478.8 606V600.5L487.90000000000003 593.1V599.1Z" fill="#000"/><rect x="445.8" y="601" width="1.25" height="29" fill="#3a3a3a"/><rect x="478.8" y="601" width="1.25" height="29" fill="#3a3a3a"/><rect x="445.8" y="626.8" width="34.2" height="3.2" fill="#000"/><rect x="469.40000000000003" y="622" width="10.6" height="3" fill="#000"/><path d="M574 606V600.5L583.1 593.1V599.1Z" fill="#000"/><path d="M602.6 606V600.5L611.7 593.1V599.1Z" fill="#000"/><rect x="574.0" y="601" width="1.25" height="29" fill="#3a3a3a"/><rect x="602.6" y="601" width="1.25" height="29" fill="#3a3a3a"/><rect x="574" y="626.8" width="29.800000000000022" height="3.2" fill="#000"/><rect x="593.2" y="622" width="10.6" height="3" fill="#000"/><circle cx="457.8" cy="597.4" r="1.1" fill="#000"/><path d="M500.2 588L506.7 582.6L513.2 588Z" fill="none" stroke="#111" stroke-width="1.25"/><path d="M533.2 588L539.7 582.6L546.2 588Z" fill="none" stroke="#111" stroke-width="1.25"/><path d="M624.8 588L631.3 582.6L637.8 588Z" fill="none" stroke="#111" stroke-width="1.25"/><circle cx="512" cy="583.2" r="1.1" fill="#000"/><rect x="500.09999999999997" y="588" width="1.25" height="27.600000000000023" fill="#3a3a3a"/><rect x="533.1" y="588" width="1.25" height="27.600000000000023" fill="#3a3a3a"/><rect x="500.2" y="612.4" width="34" height="3.3" fill="#000"/><rect x="523.2" y="607.6" width="11" height="3" fill="#000"/><rect x="624.4" y="588" width="1.25" height="22.5" fill="#3a3a3a"/><circle cx="557.6" cy="595.7" r="1.5" fill="#000"/><path d="M556.6 596.6Q560.6 598.4 564.6 594.3" stroke="#000" stroke-width="0.9" fill="none"/><circle cx="554.3" cy="602.7" r="1.5" fill="#000"/><path d="M553.3 603.6Q557.6 605.2 561.5 601.4" stroke="#000" stroke-width="0.9" fill="none"/><path d="M564.9 593.8L555.3 612.9" stroke="#000" stroke-width="1" fill="none"/></svg>
<div style="left:1px;top:461.5px;width:2px;height:7px;background:#7e7e7e"></div>
<div style="left:927px;top:461.5px;width:2px;height:7px;background:#7e7e7e"></div>
<div style="left:0px;top:1px;width:1px;height:735px;background:#a4a4a4"></div>
<div style="left:929px;top:0px;width:1px;height:736px;background:#c6c6c6"></div>
</body></html>
